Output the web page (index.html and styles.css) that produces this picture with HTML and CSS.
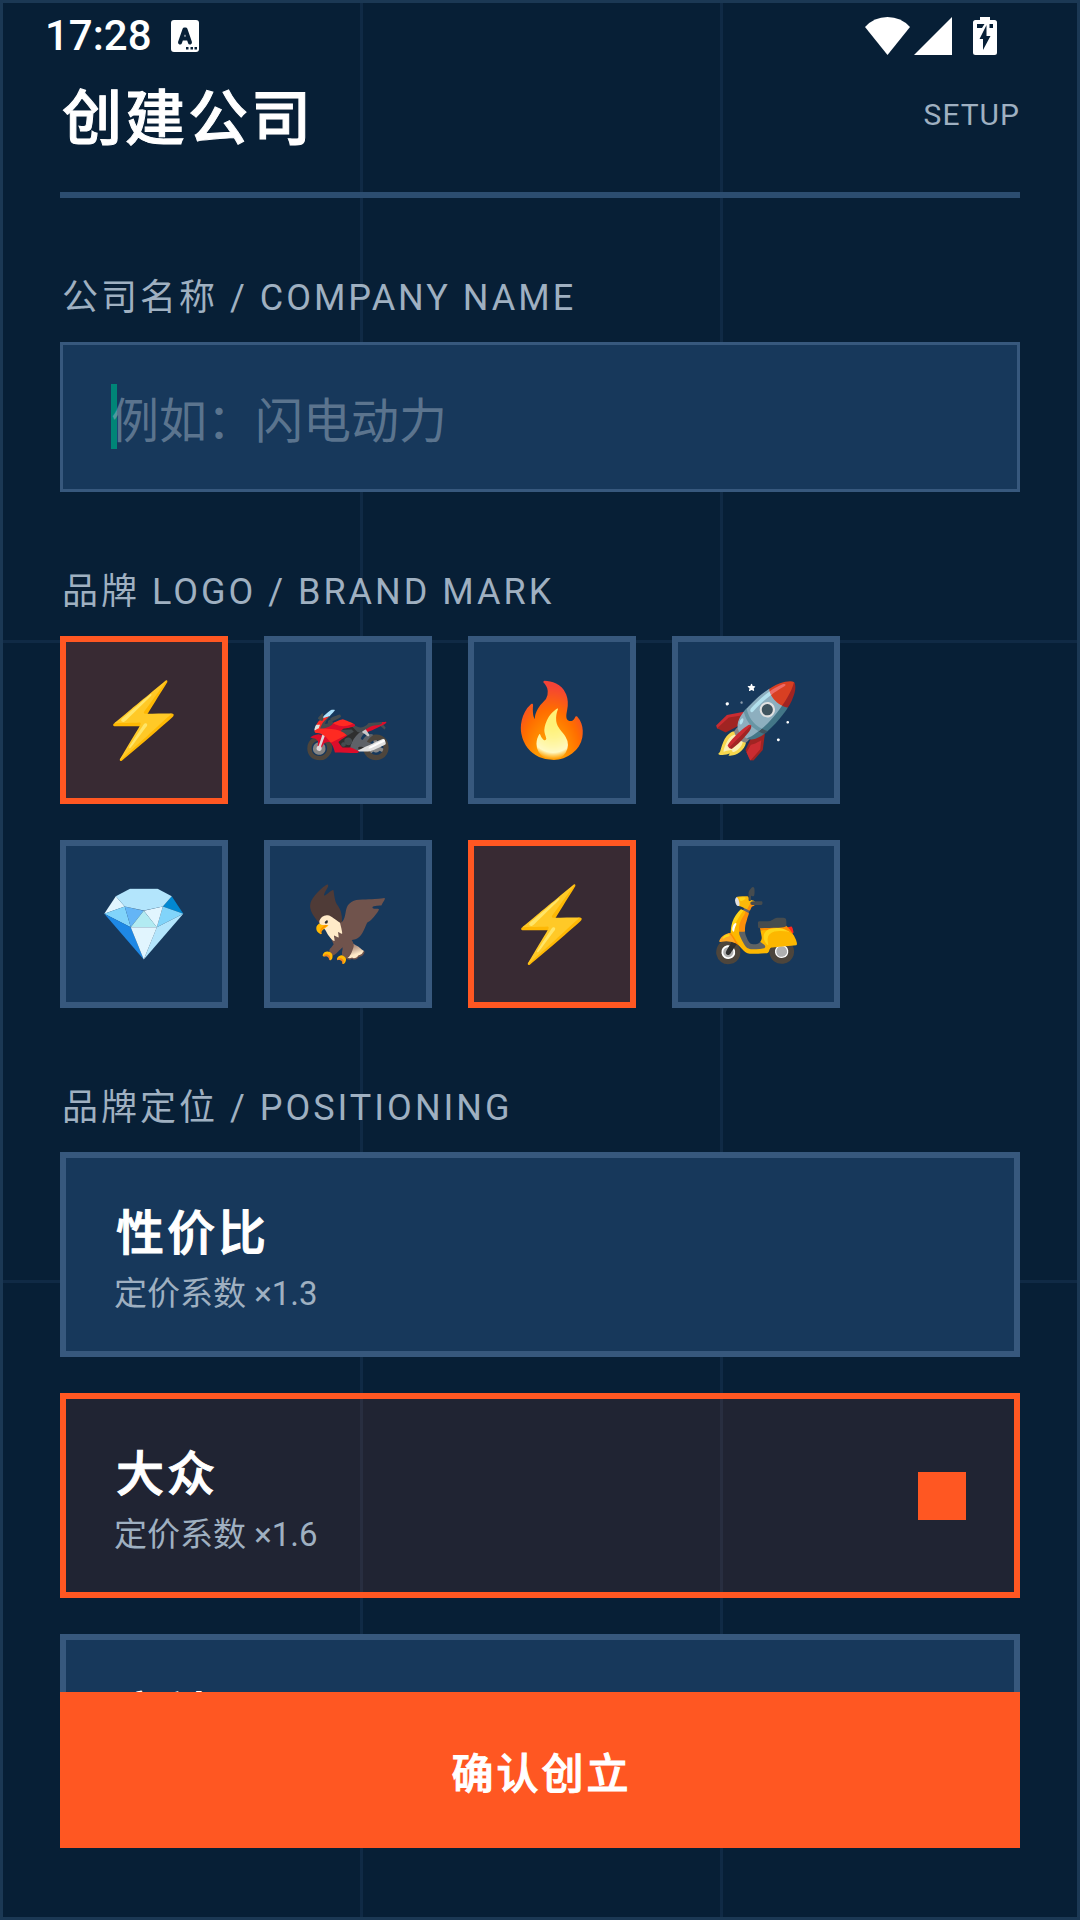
FILE: index.html
```html
<!DOCTYPE html>
<html lang="zh-CN">

<head>
    <meta charset="UTF-8">
    <meta name="viewport" content="width=device-width, initial-scale=1.0">
    <title>创建公司</title>
    <link rel="stylesheet" href="styles.css">
</head>

<body>
    <div class="page">
        <!-- 状态栏 -->
        <div class="statusBar">
            <span class="time">17:28</span>
            <svg class="iconApp" width="28" height="32" viewBox="0 0 28 32">
                <rect width="28" height="32" rx="3" fill="#fff" />
                <path d="M9 22.500 L13.500 9.500 H14.500 L19 22.500 M10.500 18.500 H17.500" fill="none" stroke="#071f36" stroke-width="4" stroke-linejoin="round" stroke-linecap="round" />
                <path d="M15 27h2.500v2.500h-2.500z M19.500 27h2.500v2.500h-2.500z M23.500 27h2.500v2.500h-2.500z" fill="#071f36" />
            </svg>
            <div class="statusIcons">
                <svg width="45" height="38" viewBox="0 0 45 38">
                    <path d="M22.500 38 L0 10 Q9 0 22.500 0 Q36 0 45 10 Z" fill="#fff" />
                </svg>
                <svg width="38" height="38" viewBox="0 0 38 38">
                    <path d="M38 0 V38 H0 Z" fill="#fff" />
                </svg>
                <svg class="iconBattery" width="24" height="38" viewBox="0 0 24 38">
                    <path d="M7 0h10v3h4.500q2.500 0 2.500 2.500V35.500q0 2.500-2.500 2.500h-19q-2.500 0-2.500-2.500V5.500q0-2.500 2.500-2.500H7z" fill="#fff" />
                    <path d="M4 7h7.500l-2.500 4H4z M16.500 7H20v4h-3.500z M13.500 8v11h4l-7.500 14v-11H6.500z" fill="#071f36" />
                </svg>
            </div>
        </div>

        <header class="header">
            <h1>创建公司</h1>
            <span class="step">SETUP</span>
        </header>

        <main class="content">
            <label class="label" for="company">公司名称 / COMPANY NAME</label>
            <div class="inputBox">
                <i class="cursor"></i>
                <input id="company" type="text" placeholder="例如：闪电动力">
            </div>

            <h2 class="label">品牌 LOGO / BRAND MARK</h2>
            <div class="logos">
                <button type="button" class="logo active">⚡</button>
                <button type="button" class="logo">🏍️</button>
                <button type="button" class="logo">🔥</button>
                <button type="button" class="logo">🚀</button>
                <button type="button" class="logo">💎</button>
                <button type="button" class="logo">🦅</button>
                <button type="button" class="logo active">⚡</button>
                <button type="button" class="logo">🛵</button>
            </div>

            <h2 class="label">品牌定位 / POSITIONING</h2>
            <div class="cards">
                <label class="card">
                    <span class="cardText">
                        <b>性价比</b>
                        <small>定价系数 ×1.3</small>
                    </span>
                    <input type="radio" name="position">
                </label>
                <label class="card active">
                    <span class="cardText">
                        <b>大众</b>
                        <small>定价系数 ×1.6</small>
                    </span>
                    <input type="radio" name="position" checked>
                </label>
                <label class="card">
                    <span class="cardText">
                        <b>高端</b>
                        <small>定价系数 ×2.2</small>
                    </span>
                    <input type="radio" name="position">
                </label>
            </div>
        </main>

        <footer class="footer">
            <button type="button" class="submit">确认创立</button>
        </footer>
    </div>
</body>

</html>
```

FILE: styles.css
```css
* {
    padding: 0;
    margin: 0;
    box-sizing: border-box;
}

body {
    background-color: #071f36;
    color: #fff;
    font-family: Roboto, "Noto Sans CJK SC", sans-serif;
}

button,
input {
    font-family: inherit;
    color: inherit;
}

/* 外框 + 九宫格线 */
.page {
    display: flex;
    flex-direction: column;
    height: 100vh;
    padding: 0 57px;
    border: 3px solid #1b3854;
    background-image:
        linear-gradient(#102a45, #102a45),
        linear-gradient(#102a45, #102a45),
        linear-gradient(#102a45, #102a45),
        linear-gradient(#102a45, #102a45);
    background-size: 3px 100%, 3px 100%, 100% 3px, 100% 3px;
    background-position: 33.43% 0, 66.86% 0, 0 33.4%, 0 66.77%;
    background-origin: border-box;
    background-repeat: no-repeat;
}

/* 状态栏 */
.statusBar {
    display: flex;
    flex-shrink: 0;
    align-items: center;
    height: 66px;
    margin: 0 23px 0 -15px;
}

.time {
    font-size: 42px;
    line-height: 66px;
    font-weight: 500;
}

.iconApp {
    margin-left: 19px;
}

.statusIcons {
    display: flex;
    gap: 4px;
    margin-left: auto;
}

.iconBattery {
    margin-left: 17px;
}

/* 标题 */
.header {
    display: flex;
    flex-shrink: 0;
    justify-content: space-between;
    height: 129px;
    border-bottom: 6px solid #2c4d70;
}

.header h1 {
    padding-left: 2px;
    font-size: 60px;
    line-height: 102px;
    font-weight: 500;
    letter-spacing: 3px;
}

/* 中等字重再描一圈边 */
.header h1,
.cardText b,
.submit {
    -webkit-text-stroke: 1px #fff;
}

.step {
    color: #9fb0c1;
    font-size: 30px;
    line-height: 92px;
    letter-spacing: 1px;
}

/* 滚动区域 */
.content {
    flex: 1;
    min-height: 0;
    overflow: hidden;
    padding-top: 72px;
}

.label {
    display: block;
    padding-left: 2px;
    color: #9fb0c1;
    font-size: 36px;
    line-height: 56px;
    font-weight: 400;
    letter-spacing: 3px;
    margin-bottom: 16px;
}

.inputBox {
    position: relative;
    margin-bottom: 72px;
    background-color: #17385b;
}

.inputBox input {
    position: relative;
    display: block;
    width: 100%;
    height: 150px;
    padding: 8px 48px 0;
    border: 3px solid #37587d;
    outline: none;
    background-color: transparent;
    font-size: 48px;
}

.inputBox input::placeholder {
    color: rgba(159, 176, 193, 0.5);
    opacity: 1;
}

.cursor {
    position: absolute;
    left: 51px;
    top: 42px;
    width: 6px;
    height: 65px;
    background-color: #008577;
}

.logos {
    display: flex;
    flex-wrap: wrap;
    gap: 36px;
    max-width: 800px;
    margin-bottom: 72px;
}

.logo {
    width: 168px;
    height: 168px;
    border: 6px solid #37587d;
    background-color: #17385b;
    font-size: 72px;
    cursor: pointer;
}

.logo.active {
    border-color: #ff5722;
    background-color: #382a33;
}

.cards {
    display: flex;
    flex-direction: column;
    gap: 36px;
}

.card {
    display: flex;
    align-items: center;
    justify-content: space-between;
    height: 205px;
    padding: 0 48px;
    border: 6px solid #37587d;
    background-color: #17385b;
    cursor: pointer;
}

.card.active {
    border-color: #ff5722;
    background-color: rgba(255, 87, 34, 0.1);
}

.cardText {
    padding-top: 12px;
}

.cardText b {
    display: block;
    padding-left: 2px;
    font-size: 48px;
    line-height: 66px;
    font-weight: 500;
    letter-spacing: 3px;
}

.cardText small {
    display: block;
    color: #9fb0c1;
    font-size: 33px;
    line-height: 54px;
}

.card input {
    appearance: none;
    width: 48px;
    height: 48px;
}

.card input:checked {
    background-color: #ff5722;
}

/* 底部按钮 */
.footer {
    flex-shrink: 0;
    padding-bottom: 69px;
}

.submit {
    display: block;
    width: 100%;
    height: 156px;
    padding-left: 3px;
    border: none;
    background-color: #ff5722;
    font-size: 42px;
    font-weight: 500;
    letter-spacing: 3px;
    cursor: pointer;
}
```
